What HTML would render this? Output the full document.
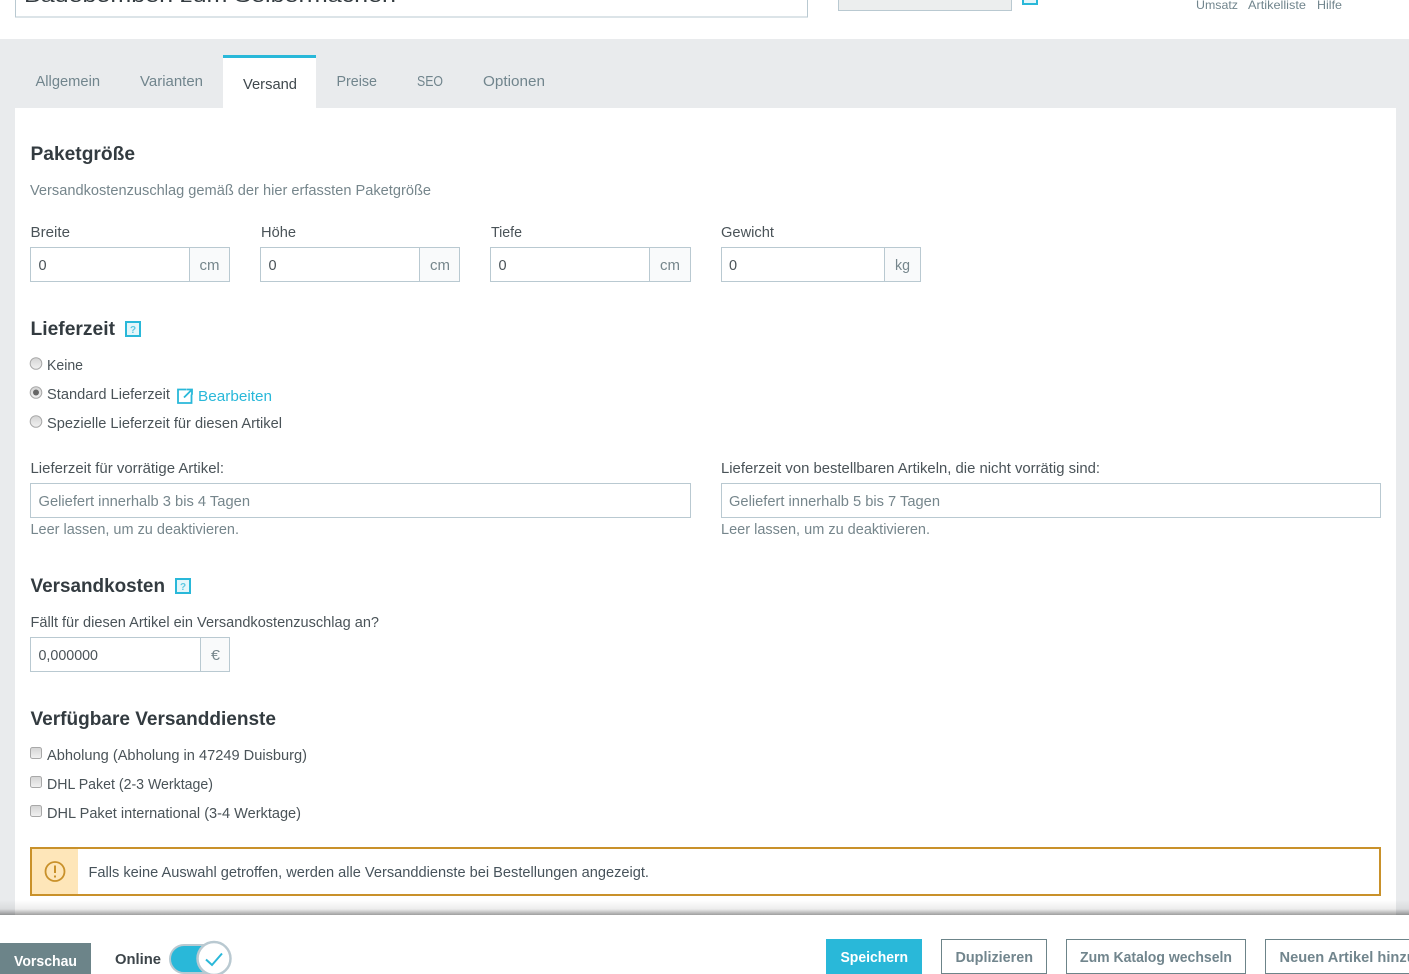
<!DOCTYPE html>
<html lang="de"><head><meta charset="utf-8"><title>Versand</title>
<style>
html,body{margin:0;padding:0;background:#fff;width:1409px;height:974px;overflow:hidden}
svg{display:block}
text{font-family:"Liberation Sans",sans-serif;font-size:14.5px;fill:#4a5358}
.h{font-weight:bold;font-size:19px;fill:#333b40}
.m{fill:#76868c}
.t{fill:#71858d}
.c{fill:#29b8d9}
.b{font-weight:bold;fill:#71858d}
.w{font-weight:bold;fill:#fff}
.box{fill:#fff;stroke:#b9c9d1;stroke-width:1}
.add{fill:#f9fafb;stroke:#b9c9d1;stroke-width:1}
</style></head><body>
<svg width="1409" height="974" viewBox="0 0 1409 974" xmlns="http://www.w3.org/2000/svg">
<defs>
<linearGradient id="sh" x1="0" y1="0" x2="0" y2="1"><stop offset="0" stop-color="#000" stop-opacity="0"/><stop offset="0.6" stop-color="#000" stop-opacity=".07"/><stop offset="1" stop-color="#000" stop-opacity=".38"/></linearGradient>
<linearGradient id="rd" x1="0" y1="0" x2="0" y2="1"><stop offset="0" stop-color="#d4d4d4"/><stop offset="1" stop-color="#f2f2f2"/></linearGradient>
</defs>
<rect width="1409" height="974" fill="#fff"/>
<!-- header -->
<rect x="15.500" y="-10" width="792" height="27" class="box"/>
<text x="24" y="2" font-size="20" style="font-size:20px;fill:#333b40" textLength="372" lengthAdjust="spacingAndGlyphs">Badebomben zum Selbermachen</text>
<rect x="838.500" y="-10" width="173" height="20.500" fill="#eceeee" stroke="#b9c9d1"/>
<rect x="1023" y="-10" width="14" height="14" fill="#e4f6fa" stroke="#29b8d9" stroke-width="2"/>
<text x="1196" y="9" style="font-size:12px" class="t" textLength="42" lengthAdjust="spacingAndGlyphs">Umsatz</text>
<text x="1248" y="9" style="font-size:12px" class="t" textLength="58" lengthAdjust="spacingAndGlyphs">Artikelliste</text>
<text x="1317" y="9" style="font-size:12px" class="t" textLength="25" lengthAdjust="spacingAndGlyphs">Hilfe</text>
<!-- main bg -->
<rect x="0" y="39" width="1409" height="876" fill="#e9ebed"/>
<rect x="15" y="108" width="1381" height="807" fill="#fff"/>
<!-- tabs -->
<rect x="223" y="55" width="93" height="53" fill="#fff"/>
<rect x="223" y="55" width="93" height="3" fill="#29b8d9"/>
<text x="35.500" y="86" class="t" textLength="64.500" lengthAdjust="spacingAndGlyphs">Allgemein</text>
<text x="140" y="86" class="t" textLength="63" lengthAdjust="spacingAndGlyphs">Varianten</text>
<text x="243" y="89" style="fill:#3f484d" textLength="54" lengthAdjust="spacingAndGlyphs">Versand</text>
<text x="336.500" y="86" class="t" textLength="40.500" lengthAdjust="spacingAndGlyphs">Preise</text>
<text x="417" y="86" class="t" textLength="26" lengthAdjust="spacingAndGlyphs">SEO</text>
<text x="483" y="86" class="t" textLength="62" lengthAdjust="spacingAndGlyphs">Optionen</text>
<!-- Paketgroesse -->
<text x="30.500" y="160" class="h" textLength="104.500" lengthAdjust="spacingAndGlyphs">Paketgröße</text>
<text x="30" y="195" class="m" textLength="401" lengthAdjust="spacingAndGlyphs">Versandkostenzuschlag gemäß der hier erfassten Paketgröße</text>
<text x="30.500" y="237" textLength="39.500" lengthAdjust="spacingAndGlyphs">Breite</text>
<text x="261" y="237" textLength="35" lengthAdjust="spacingAndGlyphs">Höhe</text>
<text x="491" y="237" textLength="31" lengthAdjust="spacingAndGlyphs">Tiefe</text>
<text x="721" y="237" textLength="53" lengthAdjust="spacingAndGlyphs">Gewicht</text>
<rect x="30.500" y="247.500" width="199" height="34" class="add"/><rect x="30.500" y="247.500" width="159" height="34" class="box"/>
<rect x="260.500" y="247.500" width="199" height="34" class="add"/><rect x="260.500" y="247.500" width="159" height="34" class="box"/>
<rect x="490.500" y="247.500" width="200" height="34" class="add"/><rect x="490.500" y="247.500" width="159" height="34" class="box"/>
<rect x="721.500" y="247.500" width="199" height="34" class="add"/><rect x="721.500" y="247.500" width="163" height="34" class="box"/>
<text x="38.500" y="270">0</text><text x="268.500" y="270">0</text><text x="498.500" y="270">0</text><text x="729" y="270">0</text>
<text x="199.500" y="270" class="m" textLength="20" lengthAdjust="spacingAndGlyphs">cm</text>
<text x="430" y="270" class="m" textLength="20" lengthAdjust="spacingAndGlyphs">cm</text>
<text x="660" y="270" class="m" textLength="20" lengthAdjust="spacingAndGlyphs">cm</text>
<text x="895" y="270" class="m" textLength="15" lengthAdjust="spacingAndGlyphs">kg</text>
<!-- Lieferzeit -->
<text x="30.500" y="335" class="h" textLength="84.500" lengthAdjust="spacingAndGlyphs">Lieferzeit</text>
<rect x="126" y="322" width="14" height="14" fill="#e4f6fa" stroke="#29b8d9" stroke-width="2"/>
<text x="133" y="333" text-anchor="middle" style="font-size:10px;font-weight:bold;fill:#5cc8e2">?</text>
<circle cx="36" cy="363.500" r="5.800" fill="url(#rd)" stroke="#a8a8a8"/>
<circle cx="36" cy="392.500" r="5.800" fill="url(#rd)" stroke="#a8a8a8"/><circle cx="36" cy="392.500" r="3" fill="#666"/>
<circle cx="36" cy="421.500" r="5.800" fill="url(#rd)" stroke="#a8a8a8"/>
<text x="47" y="370" textLength="36" lengthAdjust="spacingAndGlyphs">Keine</text>
<text x="47" y="399" textLength="123" lengthAdjust="spacingAndGlyphs">Standard Lieferzeit</text>
<path d="M186.500 389.500H178V403H191.500V394.500M184 397.500L191 390.500M186.800 389.500H192V394.800" fill="none" stroke="#29b8d9" stroke-width="1.800"/>
<text x="198" y="401" class="c" textLength="74" lengthAdjust="spacingAndGlyphs">Bearbeiten</text>
<text x="47" y="428" textLength="235" lengthAdjust="spacingAndGlyphs">Spezielle Lieferzeit für diesen Artikel</text>
<text x="30.500" y="473" textLength="193.500" lengthAdjust="spacingAndGlyphs">Lieferzeit für vorrätige Artikel:</text>
<text x="721" y="473" textLength="379" lengthAdjust="spacingAndGlyphs">Lieferzeit von bestellbaren Artikeln, die nicht vorrätig sind:</text>
<rect x="30.500" y="483.500" width="660" height="34" class="box"/>
<rect x="721.500" y="483.500" width="659" height="34" class="box"/>
<text x="38.500" y="506" class="m" textLength="211.500" lengthAdjust="spacingAndGlyphs">Geliefert innerhalb 3 bis 4 Tagen</text>
<text x="729" y="506" class="m" textLength="211" lengthAdjust="spacingAndGlyphs">Geliefert innerhalb 5 bis 7 Tagen</text>
<text x="30.500" y="534" class="m" textLength="208.500" lengthAdjust="spacingAndGlyphs">Leer lassen, um zu deaktivieren.</text>
<text x="721" y="534" class="m" textLength="209" lengthAdjust="spacingAndGlyphs">Leer lassen, um zu deaktivieren.</text>
<!-- Versandkosten -->
<text x="30.500" y="592" class="h" textLength="134.500" lengthAdjust="spacingAndGlyphs">Versandkosten</text>
<rect x="176" y="579" width="14" height="14" fill="#e4f6fa" stroke="#29b8d9" stroke-width="2"/>
<text x="183" y="590" text-anchor="middle" style="font-size:10px;font-weight:bold;fill:#5cc8e2">?</text>
<text x="30.500" y="627" textLength="348.500" lengthAdjust="spacingAndGlyphs">Fällt für diesen Artikel ein Versandkostenzuschlag an?</text>
<rect x="30.500" y="637.500" width="199" height="34" class="add"/><rect x="30.500" y="637.500" width="170" height="34" class="box"/>
<text x="38.500" y="660" textLength="59.500" lengthAdjust="spacingAndGlyphs">0,000000</text>
<text x="211" y="660" class="m" textLength="9" lengthAdjust="spacingAndGlyphs">€</text>
<!-- Versanddienste -->
<text x="30.500" y="725" class="h" textLength="245.500" lengthAdjust="spacingAndGlyphs">Verfügbare Versanddienste</text>
<rect x="30.500" y="747.500" width="11" height="11" rx="2" fill="url(#rd)" stroke="#a8a8a8"/>
<rect x="30.500" y="776.500" width="11" height="11" rx="2" fill="url(#rd)" stroke="#a8a8a8"/>
<rect x="30.500" y="805.500" width="11" height="11" rx="2" fill="url(#rd)" stroke="#a8a8a8"/>
<text x="47" y="760" textLength="260" lengthAdjust="spacingAndGlyphs">Abholung (Abholung in 47249 Duisburg)</text>
<text x="47" y="789" textLength="166" lengthAdjust="spacingAndGlyphs">DHL Paket (2-3 Werktage)</text>
<text x="47" y="818" textLength="254" lengthAdjust="spacingAndGlyphs">DHL Paket international (3-4 Werktage)</text>
<!-- Warning -->
<rect x="31" y="848" width="47" height="47" fill="#fee6b9"/>
<rect x="31" y="848" width="1349" height="47" fill="none" stroke="#c9912a" stroke-width="2"/>
<circle cx="55" cy="871.500" r="9.500" fill="none" stroke="#c9912a" stroke-width="1.800"/>
<path d="M55 865.500V873M55 875.500V877.500" stroke="#c9912a" stroke-width="2" fill="none"/>
<text x="88.500" y="877" style="fill:#47535b" textLength="560.500" lengthAdjust="spacingAndGlyphs">Falls keine Auswahl getroffen, werden alle Versanddienste bei Bestellungen angezeigt.</text>
<!-- Footer -->
<rect x="0" y="900" width="1409" height="15" fill="url(#sh)"/>
<rect x="0" y="915" width="1409" height="59" fill="#fff"/>
<rect x="0" y="943" width="91" height="31" fill="#6c8489"/>
<text x="14" y="966" class="w" textLength="63" lengthAdjust="spacingAndGlyphs">Vorschau</text>
<text x="115" y="964" style="font-weight:bold;fill:#3c4449" textLength="46" lengthAdjust="spacingAndGlyphs">Online</text>
<rect x="170" y="945" width="48" height="28" rx="14" fill="#29b8d9" stroke="#b9c9d1" stroke-width="2"/>
<circle cx="214" cy="958.500" r="16.500" fill="#fff" stroke="#b9c9d1" stroke-width="2.500"/>
<path d="M206 959.500L212 965L222 953.500" fill="none" stroke="#29b8d9" stroke-width="2"/>
<rect x="826" y="939" width="96" height="35" fill="#29b8d9"/>
<text x="840.500" y="962" class="w" textLength="67.500" lengthAdjust="spacingAndGlyphs">Speichern</text>
<rect x="941.500" y="939.500" width="105" height="34" fill="#fff" stroke="#6c8489"/>
<text x="955.500" y="962" class="b" textLength="77.500" lengthAdjust="spacingAndGlyphs">Duplizieren</text>
<rect x="1066.500" y="939.500" width="179" height="34" fill="#fff" stroke="#6c8489"/>
<text x="1080" y="962" class="b" textLength="152" lengthAdjust="spacingAndGlyphs">Zum Katalog wechseln</text>
<rect x="1265.500" y="939.500" width="190" height="34" fill="#fff" stroke="#6c8489"/>
<text x="1279.500" y="962" class="b" textLength="176" lengthAdjust="spacingAndGlyphs">Neuen Artikel hinzufügen</text>
</svg>
</body></html>
